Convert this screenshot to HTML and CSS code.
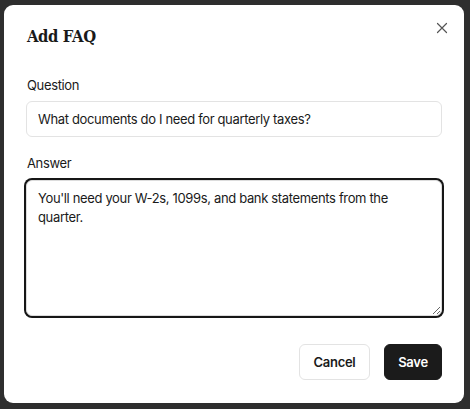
FILE: index.html
```html
<!DOCTYPE html>
<html>
<head>
<meta charset="utf-8">
<link rel="stylesheet" href="styles.css">
</head>
<body>
<div class="dialog">
  <div class="header">
    <h2 class="title">Add FAQ</h2>
    <button class="close" aria-label="Close">
      <svg width="12" height="12" viewBox="0 0 12 12"><path d="M1.5 1.5 L10.5 10.5 M10.5 1.5 L1.5 10.5" stroke="#555" stroke-width="1.2" stroke-linecap="round" fill="none"/></svg>
    </button>
  </div>
  <label class="label">Question</label>
  <input class="input" type="text" value="What documents do I need for quarterly taxes?">
  <label class="label label-answer">Answer</label>
  <textarea class="textarea">You'll need your W-2s, 1099s, and bank statements from the quarter.</textarea>
  <div class="actions">
    <button class="btn btn-cancel">Cancel</button>
    <button class="btn btn-save">Save</button>
  </div>
</div>
</body>
</html>
```

FILE: styles.css
```css
html, body {
  margin: 0;
  padding: 0;
  background: #2e2e2e;
  height: 100%;
}
body {
  padding: 5px 0 0 4px;
  box-sizing: border-box;
  font-family: Inter, "Noto Sans", sans-serif;
}
.dialog {
  width: 460px;
  height: 398px;
  box-sizing: border-box;
  background: #fff;
  border-radius: 9px;
  padding: 18px 22px 23px 22px;
  display: flex;
  flex-direction: column;
}
.header {
  display: flex;
  justify-content: space-between;
  align-items: flex-start;
  height: 28px;
}
.title {
  margin: 0 0 0 1px;
  font-family: "DejaVu Serif", "Liberation Serif", serif;
  font-stretch: condensed;
  font-weight: 700;
  font-size: 16.5px;
  line-height: 28px;
  color: #1a1a1a;
  letter-spacing: -0.4px;
}
.close {
  border: none;
  background: none;
  padding: 0;
  width: 12px;
  height: 12px;
  margin: -1px -6px 0 0;
  display: flex;
  cursor: pointer;
}
.label {
  display: block;
  font-size: 13px;
  letter-spacing: -0.35px;
  line-height: 20px;
  color: #1a1a1a;
  margin-top: 24px;
  margin-left: 1px;
}
.label-answer {
  margin-top: 16px;
}
.input {
  margin-top: 6px;
  height: 36px;
  box-sizing: border-box;
  border: 1px solid #e3e3e3;
  border-radius: 6px;
  padding: 0 11px;
  font-family: Inter, "Noto Sans", sans-serif;
  font-size: 13px;
  letter-spacing: -0.35px;
  color: #1a1a1a;
  outline: none;
  width: 100%;
}
.textarea {
  margin-top: 7px;
  height: 136px;
  box-sizing: border-box;
  border: 1px solid #dcdcdc;
  border-radius: 6px;
  box-shadow: 0 0 0 2px #161616;
  padding: 8px 11px;
  font-family: Inter, "Noto Sans", sans-serif;
  font-size: 13px;
  letter-spacing: -0.35px;
  line-height: 19px;
  color: #1a1a1a;
  outline: none;
  width: 100%;
  resize: vertical;
}
.actions {
  margin-top: auto;
  display: flex;
  justify-content: flex-end;
  gap: 14px;
}
.btn {
  height: 36px;
  box-sizing: border-box;
  border-radius: 6px;
  font-family: Inter, "Noto Sans", sans-serif;
  font-size: 13px;
  letter-spacing: -0.3px;
  font-weight: 600;
  padding: 0;
  cursor: pointer;
}
.btn-cancel {
  background: #fff;
  border: 1px solid #e3e3e3;
  color: #1a1a1a;
  width: 71px;
}
.btn-save {
  background: #1b1b1b;
  border: 1px solid #1b1b1b;
  color: #fff;
  width: 58px;
}
```
